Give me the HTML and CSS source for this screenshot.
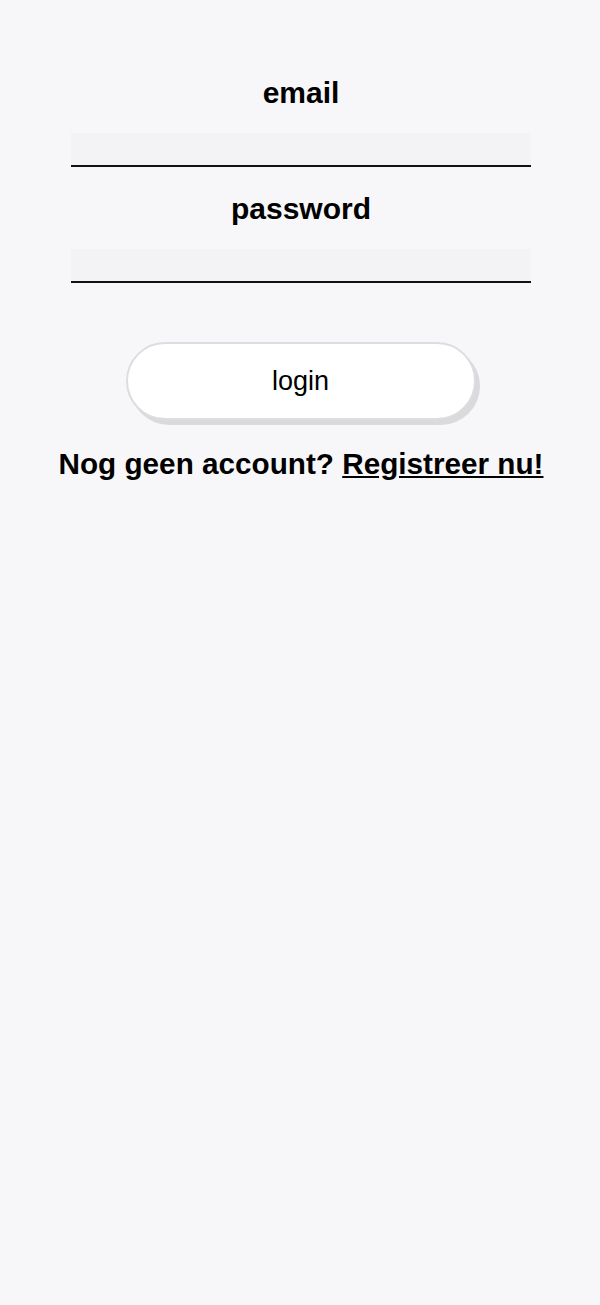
FILE: index.html
```html
<!DOCTYPE html>
<html lang="nl">
<head>
<meta charset="utf-8">
<title>Login</title>
<link rel="stylesheet" href="styles.css">
</head>
<body>
<main class="page">
  <form class="form">
    <label class="label" for="email">email</label>
    <input class="field" id="email" type="email">
    <label class="label" for="password">password</label>
    <input class="field" id="password" type="password">
    <button class="btn" type="button">login</button>
  </form>
  <p class="signup">Nog geen account? <a class="link" href="#">Registreer nu!</a></p>
</main>
</body>
</html>
```
FILE: styles.css
```css
html, body {
  margin: 0;
  padding: 0;
  background: #f7f6f9;
}
body {
  font-family: "Liberation Sans", Arial, sans-serif;
  color: #000;
  min-height: 1305px;
}
.page {
  display: flex;
  flex-direction: column;
  align-items: center;
  padding-top: 75px;
  padding-left: 2px;
}
.form {
  display: flex;
  flex-direction: column;
  align-items: center;
  width: 460px;
}
.label {
  display: block;
  font-size: 30px;
  line-height: 36px;
  font-weight: bold;
  margin-bottom: 22px;
}
.field {
  box-sizing: border-box;
  width: 460px;
  height: 34px;
  margin: 0 0 24px 0;
  border: none;
  border-bottom: 2px solid #111;
  background: #f3f2f5;
  padding: 0 6px;
  font-size: 18px;
  outline: none;
}
.field + .label + .field {
  margin-bottom: 0;
}
.btn {
  box-sizing: border-box;
  margin-top: 59px;
  margin-right: 1px;
  width: 350px;
  height: 78px;
  border: 2px solid #dddce0;
  border-radius: 39px;
  background: #fff;
  box-shadow: 4px 5px 0 0 #dad9dc;
  font-family: "Liberation Sans", Arial, sans-serif;
  font-size: 27px;
  color: #000;
  cursor: pointer;
}
.signup {
  margin: 26px 0 0 0;
  font-size: 29.7px;
  line-height: 36px;
  font-weight: bold;
  white-space: nowrap;
}
.link {
  color: #000;
  text-decoration: underline;
}
```
